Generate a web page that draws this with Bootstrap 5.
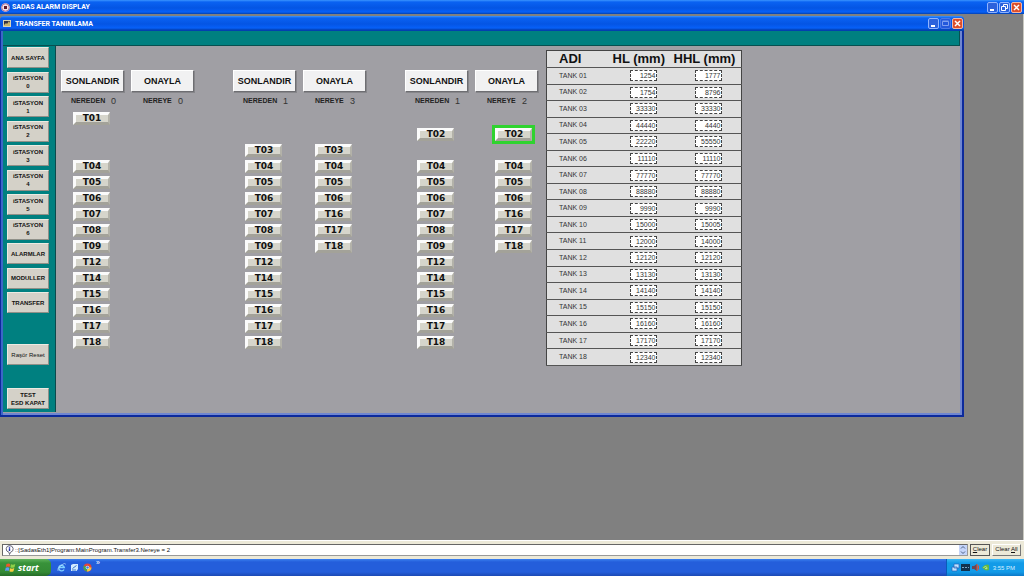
<!DOCTYPE html>
<html lang="tr">
<head>
<meta charset="utf-8">
<meta name="viewport" content="width=device-width, initial-scale=1">
<title>SADAS ALARM DISPLAY</title>
<link rel="stylesheet" href="https://cdn.jsdelivr.net/npm/bootstrap@5.3.0/dist/css/bootstrap.min.css">
<style>
body{font-family:"Liberation Sans",sans-serif;font-size:7px;line-height:8px;color:#111;background:#808080}
button,input{font-family:inherit;color:inherit;padding:0;border-radius:0}
.xp-title{height:14px;background:linear-gradient(#3a94ff 0,#0a62f2 2px,#0455e4 8px,#0660f8 12px,#0340b0 14px);color:#fff;font:bold 7px/12px Roboto,sans-serif;padding:0 2px 0 1px;gap:2px}
.child-win .xp-title{padding:0 1px 0 3px;border-radius:4px 4px 0 0;height:15px;line-height:14px;gap:3px}
.xp-title svg{width:9px;height:9px}
.caption-set{gap:1px}
.caption-btn{width:11px;height:11px;border:1px solid #8fb4ff;border-radius:2px;background:#2c62dc;display:flex}
.caption-btn.is-close{background:#dd4f2c;border-color:#f3b8a6}
.caption-btn.is-off{border-color:#4a78e6;background:#2358dc}
.desk{border-right:1px solid #c8c8c0;padding-top:2px}
.child-win{margin-right:59px}
.child-body{border:solid #0c2a9c;border-width:0 2px 2px 1px;box-shadow:inset 2px 0 #3c66c8,inset -2px -2px #6f86d0;padding:0 2px 3px 2px;background:#a09fa4}
.teal{background:#008080}
.strip{height:15px;border:solid #075050;border-width:0 1px 1px 0}
.sidebar{width:53px;padding:1px 6px 3px 4px;border-right:1px solid #0b4a4c}
.menu{height:266px}
.nav-key{height:21px;border:1px solid;border-color:#ecebe2 #8f9088 #8f9088 #ecebe2;background:#d4d1c8;font-size:6px;line-height:8px;font-weight:bold;width:100%}
.reset-key{margin-top:31px}
.test-key{margin-top:23px}
.main-pane{padding:4px 0 0 5px}
.groups{gap:39px;padding-top:20px}
.pair{gap:7px}
.lane{width:63px}
.cmd{height:22px;width:100%;background:#f1f1f2;border:1px solid;border-color:#fff #6e6e72 #6e6e72 #fff;box-shadow:1px 1px #86868a;font-size:9px;line-height:10px;font-weight:bold}
.readout{padding:0 8px 0 10px;height:10px;margin:4px 0 6px;line-height:10px;font-weight:bold;color:#222}
.readout output{font:9px/10px "Liberation Sans Narrow","Liberation Sans",sans-serif;color:#333}
.lane + .lane .readout{padding:0 11px 0 12px}
.stack{width:37px;margin-left:12px;gap:3px}
.g3 .lane + .lane .stack{margin-left:20px}
.slot{height:13px}
.tk{height:13px;width:100%;display:block;border:solid;border-width:3px 2px 3px 3px;border-color:#fbfbfb #b3b2a9 #a3a299 #fbfbfb;background:#d6d5cb;font:bold 9px/7px "DejaVu Sans",sans-serif;color:#111}
.tk.picked{outline:3px solid #2fd32f}
.tank-box{margin-left:8px}
.tanks{width:196px;height:316px;background:#e0e0e0;border:1px solid #444;border-collapse:collapse;table-layout:fixed;line-height:8px}
.tanks tr{border-bottom:1px solid #555}
.tanks th,.tanks td{padding:0;vertical-align:middle}
.tanks thead th{font-size:13px;line-height:14px;height:17px;color:#111;white-space:nowrap}
.tanks tbody th{font-weight:normal;color:#333}
.tanks tr > :first-child{padding-left:12px}
.c-name{width:66px}
.c-hl{width:61px}
.tanks input{display:block;width:27px;height:11px;border:1px dashed #444;background:#fff;text-align:right;font-size:7px;line-height:9px;color:#333}
.hl-cell input{margin-left:17px}
.hhl-cell input{margin-left:21px}
.status{background:#ece9d8;height:19px;border-top:1px solid #fff;padding:2px 3px 3px 2px;gap:2px;font-size:6px}
.log{border:1px solid;border-color:#666 #999 #999 #666;background:#fff;height:12px;padding-left:2px;line-height:10px;gap:1px}
.log input{border:0;outline:0;font:6px/10px "Liberation Sans",sans-serif;min-width:0;background:transparent}
.spin{width:8px;background:#c5d5fa}
.spin button{border:0;background:transparent;height:5px;line-height:0;display:block;width:8px}
.spin svg{width:8px;height:5px;display:block}
.flat{font:6px/9px "Liberation Sans",sans-serif;height:12px;border:1px solid;border-color:#fff #777 #777 #fff;background:#ece9d8}
.flat.wide{width:29px}
.flat.slim{width:20px;border-color:#555}
.taskbar{height:17px;background:linear-gradient(#3a80f0,#245edb 3px,#245edb 13px,#1c49b4);color:#fff}
.start{width:51px;border:0;border-radius:0 5px 5px 0;background:linear-gradient(#5fb35c,#38923a 4px,#348a35 13px,#256b28);color:#fff;font:italic bold 9px/14px "Open Sans",sans-serif;padding:0 0 0 5px;gap:2px}
.start svg{width:11px;height:11px}
.quick{padding-left:6px;gap:4px}
.quick svg,.tray svg{width:9px;height:9px}
.tray{width:78px;background:linear-gradient(#3cb8f6,#129be8 4px,#129be8 13px,#0d79c8);border-left:1px solid #0b5cb8;padding:0 9px 0 4px;gap:1px}
.clock{font-size:6px;color:#d5efff}
</style>
</head>
<body class="d-flex flex-column min-vh-100">
<header class="xp-title d-flex align-items-center">
  <svg viewBox="0 0 9 9"><circle cx="4.500" cy="4.500" r="4.300" fill="#efe2ea"/><circle cx="4.500" cy="4.500" r="3.700" fill="none" stroke="#b06080" stroke-width=".8"/><path d="M3 3h3v3H3z" fill="#5a1830"/></svg>
  <span class="me-auto">SADAS ALARM DISPLAY</span>
  <div class="caption-set d-flex">
    <button class="caption-btn" aria-label="Minimize"><svg viewBox="0 0 9 9"><path d="M2 7h4" stroke="#fff" stroke-width="2"/></svg></button>
    <button class="caption-btn" aria-label="Restore"><svg viewBox="0 0 9 9"><path d="M3.500 3V1.500h4v4H6M1.500 3.500h4v4h-4z" fill="none" stroke="#fff"/></svg></button>
    <button class="caption-btn is-close" aria-label="Close"><svg viewBox="0 0 9 9"><path d="M2 2l5 5M7 2L2 7" stroke="#fff" stroke-width="1.500"/></svg></button>
  </div>
</header>

<main class="desk flex-grow-1">
  <section class="child-win">
    <div class="xp-title d-flex align-items-center">
      <svg viewBox="0 0 9 9"><path d="M0 1h8v7H0z" fill="#d8d4b8"/><path d="M1 2h6v5H1z" fill="#334"/><path d="M1 6l2-2 1 1 2-3 1 2v3H1z" fill="#c9b46a"/></svg>
      <span class="me-auto">TRANSFER TANIMLAMA</span>
      <div class="caption-set d-flex">
        <button class="caption-btn" aria-label="Minimize window"><svg viewBox="0 0 9 9"><path d="M2 7h4" stroke="#fff" stroke-width="2"/></svg></button>
        <button class="caption-btn is-off" aria-label="Maximize window" disabled><svg viewBox="0 0 9 9"><path d="M1.500 2.500h6v4h-6zM1.500 2h6" fill="none" stroke="#7f9ff0"/></svg></button>
        <button class="caption-btn is-close" aria-label="Close window"><svg viewBox="0 0 9 9"><path d="M2 2l5 5M7 2L2 7" stroke="#fff" stroke-width="1.500"/></svg></button>
      </div>
    </div>
    <div class="child-body">
      <div class="teal strip"></div>
      <div class="d-flex">
        <nav class="teal sidebar flex-shrink-0">
          <div class="menu d-flex flex-column justify-content-between">
            <button class="nav-key">ANA SAYFA</button>
            <button class="nav-key">iSTASYON<br>0</button>
            <button class="nav-key">iSTASYON<br>1</button>
            <button class="nav-key">iSTASYON<br>2</button>
            <button class="nav-key">iSTASYON<br>3</button>
            <button class="nav-key">iSTASYON<br>4</button>
            <button class="nav-key">iSTASYON<br>5</button>
            <button class="nav-key">iSTASYON<br>6</button>
            <button class="nav-key">ALARMLAR</button>
            <button class="nav-key">MODULLER</button>
            <button class="nav-key">TRANSFER</button>
          </div>
          <button class="nav-key fw-normal d-block reset-key">Raşör Reset</button>
          <button class="nav-key d-block test-key">TEST<br>ESD KAPAT</button>
        </nav>
        <div class="main-pane d-flex align-items-start flex-grow-1">
          <div class="groups d-flex" id="groups"></div>
          <div class="tank-box">
            <table class="tanks">
              <colgroup><col class="c-name"><col class="c-hl"><col></colgroup>
              <thead><tr><th>ADI</th><th>HL (mm)</th><th>HHL (mm)</th></tr></thead>
              <tbody id="tanks"></tbody>
            </table>
          </div>
        </div>
      </div>
    </div>
  </section>
</main>

<footer>
  <div class="status d-flex align-items-center">
    <div class="log d-flex flex-grow-1 align-items-center">
      <svg width="9" height="10" viewBox="0 0 9 10"><path d="M4.500.5a4 3.500 0 0 1 1 6.800L4.500 9.500l-.5-2.200A4 3.500 0 0 1 4.500.5z" fill="#fff" stroke="#667"/><path d="M4.500 3.300V6M4.500 1.700v1" stroke="#2030b0" stroke-width="1.400"/></svg>
      <input class="flex-grow-1" aria-label="Message" value="::[SadasEth1]Program:MainProgram.Transfer3.Nereye = 2" readonly>
      <div class="spin">
        <button aria-label="Previous message"><svg viewBox="0 0 8 5"><path d="M2 3.500l2-2 2 2" fill="none" stroke="#4d6185"/></svg></button>
        <button aria-label="Next message"><svg viewBox="0 0 8 5"><path d="M2 1.500l2 2 2-2" fill="none" stroke="#4d6185"/></svg></button>
      </div>
    </div>
    <button class="flat slim"><u>C</u>lear</button>
    <button class="flat wide">Clear <u>A</u>ll</button>
  </div>
  <div class="taskbar d-flex">
    <button class="start d-flex align-items-center">
      <svg viewBox="0 0 11 11"><path d="M1.500 2Q3.500.8 5.300 2L4.600 5Q2.700 4 .8 5z" fill="#f0562c"/><path d="M6 2.300Q8 3.300 10.300 2L9.500 5.200Q7.300 6.400 5.300 5.300z" fill="#8fd048"/><path d="M.7 5.800Q2.600 4.800 4.400 5.800L3.700 9Q1.900 8 0 9z" fill="#5a9cf5"/><path d="M5.100 6.200Q7 7.200 9.300 6.100L8.500 9.300Q6.400 10.400 4.400 9.300z" fill="#fbcb3c"/></svg>
      <span>start</span>
    </button>
    <div class="quick d-flex align-items-center">
      <svg viewBox="0 0 9 9"><path d="M7 6.500A2.800 2.800 0 1 1 7.300 4.500H2" fill="none" stroke="#7fd0ff" stroke-width="1.400"/><path d="M1 8Q-.5 6 4 2.500T8.500 1.500" fill="none" stroke="#c9e8ff" stroke-width=".6"/></svg>
      <svg viewBox="0 0 9 9"><path d="M1 2l2-1h5v5L6.500 8H1z" fill="#d4ebff"/><path d="M2.500 5.500L6.500 2.500M2 7h4" stroke="#3a78c8"/></svg>
      <svg viewBox="0 0 9 9"><circle cx="4.500" cy="4.500" r="4" fill="#e2463a"/><path d="M4.500 4.500L1 2.500A4 4 0 0 0 4 8.500z" fill="#3ba757"/><path d="M4.500 4.500h4A4 4 0 0 1 4 8.500z" fill="#f6c93a"/><circle cx="4.500" cy="4.500" r="1.800" fill="#fff"/><circle cx="4.500" cy="4.500" r="1.300" fill="#3b7de8"/></svg>
      <span class="align-self-start">»</span>
    </div>
    <div class="tray d-flex align-items-center ms-auto">
      <svg viewBox="0 0 9 9"><path d="M3 1h5v4H3zM1 4h5v4H1z" fill="#bfe3ff" stroke="#2b63b8" stroke-width=".7"/></svg>
      <svg viewBox="0 0 9 9"><path d="M0 1h9v7H0z" fill="#12324e"/><path d="M1 4.500h7" stroke="#7ba5c4" stroke-dasharray="2 1"/></svg>
      <svg viewBox="0 0 9 9"><path d="M1 3h2l3-2v7L3 6H1z" fill="#6b4654"/><path d="M6 1v7M7.500 2.500v4" stroke="#e3502e"/></svg>
      <svg viewBox="0 0 9 9"><path d="M1 4.500Q4.500.5 8 2v5Q4 8.500 1 4.500z" fill="#62b846"/><path d="M2.500 4.500Q5 2.500 6 4.500T4 5.500" fill="none" stroke="#d5f0b8" stroke-width=".7"/></svg>
      <span class="clock ms-auto">3:55 PM</span>
    </div>
  </div>
</footer>

<script>
const all = ["T04","T05","T06","T07","T08","T09","T12","T14","T15","T16","T17","T18"];
const short = ["T04","T05","T06","T16","T17","T18"];
const none = [];
const groups = [
  { from: 0, to: 0, left: ["T01", "", "", ...all], right: none },
  { from: 1, to: 3, left: ["", "", "T03", ...all], right: ["", "", "T03", ...short] },
  { from: 1, to: 2, left: ["", "T02", "", ...all], right: ["", "T02", "", ...short], picked: "T02" }
];
const stack = (names, picked) => `<div class="stack d-flex flex-column">` + names.map(n =>
  n ? `<button class="tk${n === picked ? " picked" : ""}">${n}</button>` : `<div class="slot"></div>`).join("") + `</div>`;
const lane = (cmd, label, value, names, picked) => `<div class="lane">
  <button class="cmd">${cmd}</button>
  <div class="readout d-flex justify-content-between"><span>${label}</span><output>${value}</output></div>
  ${stack(names, picked)}</div>`;
document.getElementById("groups").innerHTML = groups.map((g, i) => `<div class="pair d-flex g${i + 1}">` +
  lane("SONLANDIR", "NEREDEN", g.from, g.left) + lane("ONAYLA", "NEREYE", g.to, g.right, g.picked) + `</div>`).join("");

const levels = [[1254,1777],[1754,8796],[33330,33330],[44440,4440],[22220,55550],[11110,11110],[77770,77770],[88880,88880],[9990,9990],
  [15000,15005],[12000,14000],[12120,12120],[13130,13130],[14140,14140],[15150,15150],[16160,16160],[17170,17170],[12340,12340]];
document.getElementById("tanks").innerHTML = levels.map(([hl, hhl], i) => {
  const name = "TANK " + String(i + 1).padStart(2, "0");
  return `<tr><th scope="row">${name}</th><td class="hl-cell"><input aria-label="${name} HL" value="${hl}"></td><td class="hhl-cell"><input aria-label="${name} HHL" value="${hhl}"></td></tr>`;
}).join("");
</script>
<script src="https://cdn.jsdelivr.net/npm/bootstrap@5.3.0/dist/js/bootstrap.bundle.min.js"></script>
</body>
</html>
